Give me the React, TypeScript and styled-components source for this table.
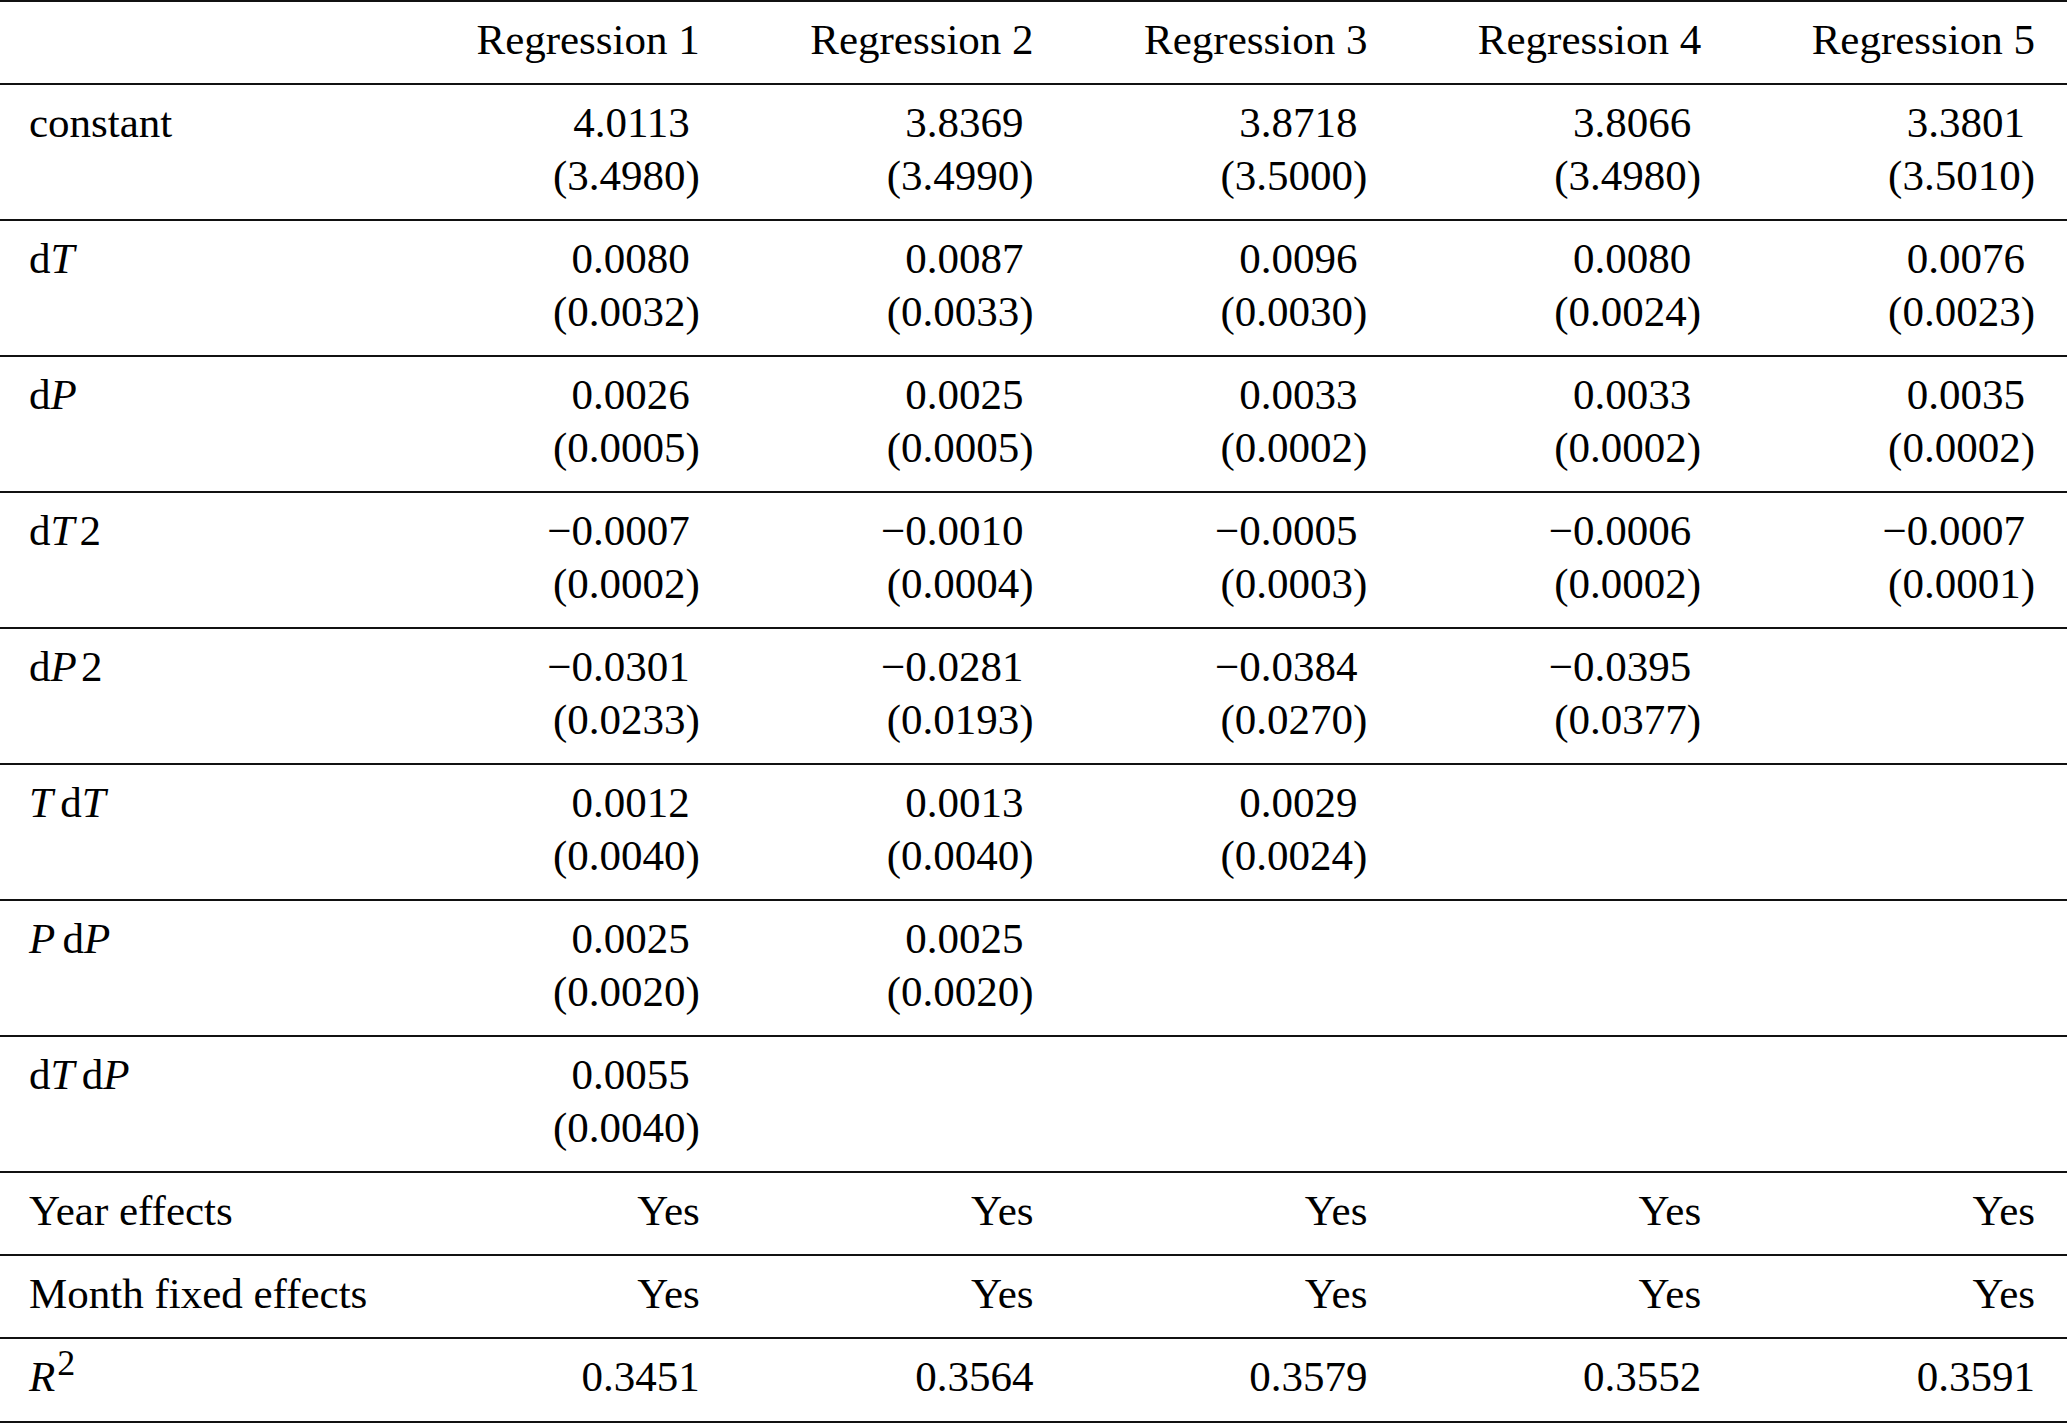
import React, { FC, ReactNode } from "react";
import styled, { createGlobalStyle } from "styled-components";

const GlobalStyle = createGlobalStyle`
  html, body {
    margin: 0;
    padding: 0;
    background: #ffffff;
  }
  body {
    font-family: "Liberation Serif", "Times New Roman", serif;
    color: #000000;
  }
`;

const COLUMNS = "398px repeat(5, 1fr)";

const Table = styled.div`
  width: 2067px;
  border-top: 2px solid #111;
  font-family: "Liberation Serif", "Times New Roman", serif;
  font-size: 43px;
  line-height: 53px;
  color: #000;
`;

const Row = styled.div<{ $last?: boolean }>`
  display: grid;
  grid-template-columns: ${COLUMNS};
  border-bottom: 2px solid #111;
  padding-top: 11px;
  padding-bottom: ${(p) => (p.$last ? "18px" : "17px")};
`;

const LabelCell = styled.div`
  padding-left: 29px;
  white-space: nowrap;
`;

const ValueCell = styled.div`
  padding-right: 32px;
  text-align: right;
  white-space: nowrap;
  display: flex;
  flex-direction: column;
  align-items: flex-end;
`;

// coefficient sits left of the closing paren of the std. error below it
const Coef = styled.span`
  padding-right: 10px;
`;

const Var = styled.i`
  font-style: italic;
`;

const Gap = styled.span<{ $w?: string }>`
  display: inline-block;
  width: ${(p) => p.$w || "0.17em"};
`;

const Power = styled.sup`
  font-size: 36px;
  line-height: 0;
  vertical-align: 16px;
  margin-left: 2px;
`;

type Coefficient = [string, string] | null;

type DataRow = {
  label: ReactNode;
  values: Coefficient[];
};

const d = "d";

const dataRows: DataRow[] = [
  {
    label: "constant",
    values: [
      ["4.0113", "3.4980"],
      ["3.8369", "3.4990"],
      ["3.8718", "3.5000"],
      ["3.8066", "3.4980"],
      ["3.3801", "3.5010"],
    ],
  },
  {
    label: (
      <>
        {d}
        <Var>T</Var>
      </>
    ),
    values: [
      ["0.0080", "0.0032"],
      ["0.0087", "0.0033"],
      ["0.0096", "0.0030"],
      ["0.0080", "0.0024"],
      ["0.0076", "0.0023"],
    ],
  },
  {
    label: (
      <>
        {d}
        <Var>P</Var>
      </>
    ),
    values: [
      ["0.0026", "0.0005"],
      ["0.0025", "0.0005"],
      ["0.0033", "0.0002"],
      ["0.0033", "0.0002"],
      ["0.0035", "0.0002"],
    ],
  },
  {
    label: (
      <>
        {d}
        <Var>T</Var>
        <Gap $w="0.12em" />2
      </>
    ),
    values: [
      ["\u22120.0007", "0.0002"],
      ["\u22120.0010", "0.0004"],
      ["\u22120.0005", "0.0003"],
      ["\u22120.0006", "0.0002"],
      ["\u22120.0007", "0.0001"],
    ],
  },
  {
    label: (
      <>
        {d}
        <Var>P</Var>
        <Gap $w="0.1em" />2
      </>
    ),
    values: [
      ["\u22120.0301", "0.0233"],
      ["\u22120.0281", "0.0193"],
      ["\u22120.0384", "0.0270"],
      ["\u22120.0395", "0.0377"],
      null,
    ],
  },
  {
    label: (
      <>
        <Var>T</Var>
        <Gap />
        {d}
        <Var>T</Var>
      </>
    ),
    values: [["0.0012", "0.0040"], ["0.0013", "0.0040"], ["0.0029", "0.0024"], null, null],
  },
  {
    label: (
      <>
        <Var>P</Var>
        <Gap />
        {d}
        <Var>P</Var>
      </>
    ),
    values: [["0.0025", "0.0020"], ["0.0025", "0.0020"], null, null, null],
  },
  {
    label: (
      <>
        {d}
        <Var>T</Var>
        <Gap />
        {d}
        <Var>P</Var>
      </>
    ),
    values: [["0.0055", "0.0040"], null, null, null, null],
  },
];

const headers = ["Regression 1", "Regression 2", "Regression 3", "Regression 4", "Regression 5"];
const yes = ["Yes", "Yes", "Yes", "Yes", "Yes"];
const rSquared = ["0.3451", "0.3564", "0.3579", "0.3552", "0.3591"];

const SimpleRow: FC<{ label: ReactNode; cells: string[]; last?: boolean }> = ({ label, cells, last }) => (
  <Row $last={last}>
    <LabelCell>{label}</LabelCell>
    {cells.map((c, i) => (
      <ValueCell key={i}>{c}</ValueCell>
    ))}
  </Row>
);

const App: FC = () => {
  return (
    <>
      <GlobalStyle />
      <Table>
        <SimpleRow label="" cells={headers} />
        {dataRows.map((row, i) => (
          <Row key={i}>
            <LabelCell>{row.label}</LabelCell>
            {row.values.map((v, j) => (
              <ValueCell key={j}>
                {v && (
                  <>
                    <Coef>{v[0]}</Coef>
                    <span>({v[1]})</span>
                  </>
                )}
              </ValueCell>
            ))}
          </Row>
        ))}
        <SimpleRow label="Year effects" cells={yes} />
        <SimpleRow label="Month fixed effects" cells={yes} />
        <SimpleRow
          last
          label={
            <>
              <Var>R</Var>
              <Power>2</Power>
            </>
          }
          cells={rSquared}
        />
      </Table>
    </>
  );
};

export default App;
